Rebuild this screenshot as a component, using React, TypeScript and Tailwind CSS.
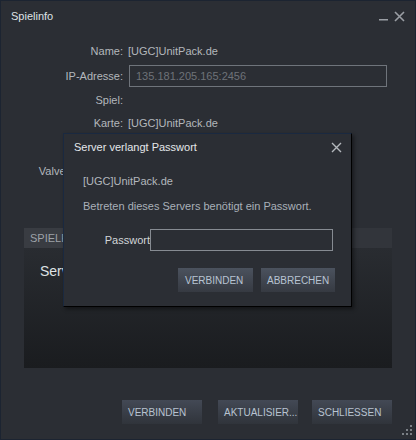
import React from "react";

const font = { fontFamily: '"Liberation Sans", Arial, sans-serif' };

// rows hidden behind the dialog keep their height but show nothing
const infoRows = [
  { label: "Name:", value: "[UGC]UnitPack.de", h: "h-[24px]" },
  { label: "IP-Adresse:", value: "ip", h: "h-[26px]" },
  { label: "Spiel:", value: "", h: "h-[22px]" },
  { label: "Karte:", value: "[UGC]UnitPack.de", h: "h-[24px]" },
  { label: "", value: "", h: "h-[24px]" },
  { label: "Valve Anti-Cheat:", value: "", h: "h-[24px]" },
  { label: "", value: "", h: "h-[24px]" },
];

const App = () => {
  return (
    <div
      className="relative w-[416px] h-[440px] overflow-hidden bg-[#2b2e34] border border-[#1c2431] text-[11px]"
      style={font}
    >
      {/* title bar */}
      <div className="h-[30px] pl-[10px] pr-[10px] flex items-center justify-between">
        <span className="text-[#dfe2e5]">Spielinfo</span>
        <div className="flex items-center gap-[6px]">
          <svg width="9" height="12" viewBox="0 0 9 12">
            <rect x="0" y="9" width="9" height="1.5" fill="#9a9ea4" />
          </svg>
          <svg width="11" height="11" viewBox="0 0 11 11">
            <path d="M1 1 L10 10 M10 1 L1 10" stroke="#9a9ea4" strokeWidth="1.6" />
          </svg>
        </div>
      </div>

      {/* info rows */}
      <div className="mt-[8px] flex flex-col">
        {infoRows.map((row, i) => (
          <div key={i} className={`${row.h} flex items-center`}>
            <div className="w-[122px] text-right text-[#b3b7bc] whitespace-nowrap">{row.label}</div>
            {row.value === "ip" ? (
              <div className="ml-[6px] w-[258px] h-[22px] border border-[#6f747b] flex items-center pl-[6px] text-[#6e7278]">
                135.181.205.165:2456
              </div>
            ) : (
              <div className="ml-[5px] text-[#b3b7bc]">{row.value}</div>
            )}
          </div>
        ))}
      </div>

      {/* tab panel */}
      <div className="mt-[21px] mx-[23px] flex flex-col">
        <div className="h-[20px] flex bg-[#32353b]">
          <div className="w-[70px] bg-[#393c42] flex items-center pl-[6px] text-[#9ea2a8]">SPIELER</div>
        </div>
        <div className="h-[120px] bg-gradient-to-b from-[#292c31] to-[#1a1c1f] pl-[16px] pt-[13px]">
          <span className="text-[14px] text-[#dfe2e5]">Server wird abgefragt...</span>
        </div>
      </div>

      {/* bottom buttons */}
      <div className="mt-[32px] pr-[23px] flex justify-end">
        <button className="w-[80px] h-[24px] pl-[6px] text-left text-[10px] text-[#b8c3d1] bg-gradient-to-b from-[#434955] to-[#30343b]">
          VERBINDEN
        </button>
        <button className="ml-[16px] w-[80px] h-[24px] pl-[6px] text-left text-[10px] text-[#b8c3d1] bg-gradient-to-b from-[#434955] to-[#30343b] whitespace-nowrap">
          AKTUALISIER...
        </button>
        <button className="ml-[14px] w-[80px] h-[24px] pl-[6px] text-left text-[10px] text-[#b8c3d1] bg-gradient-to-b from-[#434955] to-[#30343b]">
          SCHLIESSEN
        </button>
      </div>

      {/* resize grip */}
      <svg className="absolute right-[3px] bottom-[4px]" width="10" height="10" viewBox="0 0 10 10">
        <rect x="8" y="0" width="2" height="2" fill="#7b8086" />
        <rect x="4" y="4" width="2" height="2" fill="#7b8086" />
        <rect x="8" y="4" width="2" height="2" fill="#7b8086" />
        <rect x="0" y="8" width="2" height="2" fill="#7b8086" />
        <rect x="4" y="8" width="2" height="2" fill="#7b8086" />
        <rect x="8" y="8" width="2" height="2" fill="#7b8086" />
      </svg>

      {/* password dialog */}
      <div className="absolute left-[62px] top-[132px] w-[289px] h-[174px] bg-[#2b2e34] border-t border-l border-[#1a2940] border-r border-b border-r-black border-b-black shadow-[2px_2px_4px_rgba(0,0,0,0.45)] flex flex-col">
        <div className="h-[26px] pl-[10px] pr-[9px] flex items-center justify-between">
          <span className="text-[#e4e7ea]">Server verlangt Passwort</span>
          <svg width="11" height="11" viewBox="0 0 11 11">
            <path d="M1 1 L10 10 M10 1 L1 10" stroke="#b4b8bd" strokeWidth="1.4" />
          </svg>
        </div>
        <div className="mt-[11px] h-[20px] pl-[19px] flex items-center text-[#b2b7bd]">[UGC]UnitPack.de</div>
        <div className="mt-[5px] h-[20px] pl-[19px] flex items-center text-[#a9b0b8]">
          Betreten dieses Servers benötigt ein Passwort.
        </div>
        <div className="mt-[13px] flex items-center">
          <div className="w-[86px] text-right text-[#d2d5d8]">Passwort</div>
          <div className="w-[183px] h-[22px] border border-[#868b92]" />
        </div>
        <div className="mt-[17px] pr-[16px] flex justify-end gap-[8px]">
          <button className="w-[75px] h-[24px] pl-[7px] text-left text-[10px] text-[#b8c4d3] bg-gradient-to-b from-[#4b525e] to-[#363a42]">
            VERBINDEN
          </button>
          <button className="w-[74px] h-[24px] pl-[6px] text-left text-[10px] text-[#b8c4d3] bg-gradient-to-b from-[#4b525e] to-[#363a42]">
            ABBRECHEN
          </button>
        </div>
      </div>
    </div>
  );
};

export default App;
